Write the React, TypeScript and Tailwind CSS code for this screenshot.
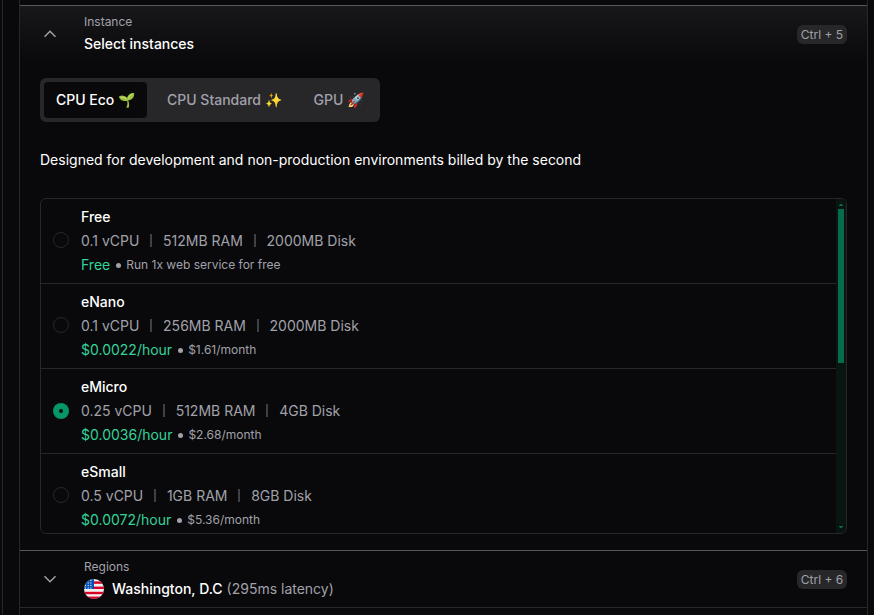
import React from "react";

type Instance = {
  name: string;
  cpu: string;
  ram: string;
  disk: string;
  price: string;
  note: string;
};

const instances: Instance[] = [
  { name: "Free", cpu: "0.1 vCPU", ram: "512MB RAM", disk: "2000MB Disk", price: "Free", note: "Run 1x web service for free" },
  { name: "eNano", cpu: "0.1 vCPU", ram: "256MB RAM", disk: "2000MB Disk", price: "$0.0022/hour", note: "$1.61/month" },
  { name: "eMicro", cpu: "0.25 vCPU", ram: "512MB RAM", disk: "4GB Disk", price: "$0.0036/hour", note: "$2.68/month" },
  { name: "eSmall", cpu: "0.5 vCPU", ram: "1GB RAM", disk: "8GB Disk", price: "$0.0072/hour", note: "$5.36/month" },
];

function Chevron({ up = false }: { up?: boolean }) {
  return (
    <svg width="20" height="20" viewBox="0 0 20 20" className="shrink-0" fill="none" stroke="#a1a1aa" strokeWidth="1.5">
      <path d={up ? "M4.5 12.8 L10 7.3 L15.5 12.8" : "M4.5 7.2 L10 12.7 L15.5 7.2"} />
    </svg>
  );
}

function Shortcut({ children }: { children: React.ReactNode }) {
  return (
    <kbd className="mt-px flex h-[19px] w-[50px] items-center justify-center rounded-md bg-[#27272a] font-[Inter,sans-serif] text-xs whitespace-nowrap text-[#a1a1aa]">
      {children}
    </kbd>
  );
}

function Separator() {
  return <span className="mb-px h-[13px] w-[2px] shrink-0 bg-[#3f3f46]" />;
}

function Radio({ checked }: { checked: boolean }) {
  return checked ? (
    <span className="flex size-4 shrink-0 items-center justify-center rounded-full bg-[#059669]">
      <span className="size-1 rounded-full bg-[#09090b]" />
    </span>
  ) : (
    <span className="mb-[2px] size-4 shrink-0 rounded-full border border-[#27272a]" />
  );
}

function InstanceRow({ item, checked }: { item: Instance; checked: boolean }) {
  return (
    <div className="flex h-[85px] shrink-0 items-center border-b border-[#27272a] pl-3">
      <Radio checked={checked} />
      <div className="ml-3 text-sm leading-6">
        <div className="font-medium text-white">{item.name}</div>
        <div className="flex items-center gap-[10.85px] text-[#a1a1aa]">
          <span>{item.cpu}</span>
          <Separator />
          <span>{item.ram}</span>
          <Separator />
          <span>{item.disk}</span>
        </div>
        <div className="flex items-center text-[#34d399]">
          <span>{item.price}</span>
          <span className="mt-px mr-[5px] ml-[6px] size-[5px] rounded-full bg-[#a1a1aa]" />
          <span className="text-xs leading-6 text-[#a1a1aa]">{item.note}</span>
        </div>
      </div>
    </div>
  );
}

function Flag() {
  return (
    <svg width="20" height="20" viewBox="0 0 20 20" className="shrink-0">
      <defs>
        <clipPath id="disc">
          <circle cx="10" cy="10" r="10" />
        </clipPath>
      </defs>
      <g clipPath="url(#disc)">
        <rect width="20" height="20" fill="#f0f0f0" />
        {[2.6, 7.8, 13, 17.8].map((y) => (
          <rect key={y} y={y - 0.2} width="20" height="2.4" fill="#d80027" />
        ))}
        <rect width="10" height="10" fill="#0052b4" />
        {[1.5, 4, 6.5, 9].map((y) =>
          [1.5, 4.2, 6.9].map((x) => <circle key={`${x}-${y}`} cx={x} cy={y} r="0.65" fill="#d5e2f0" />)
        )}
      </g>
    </svg>
  );
}

export default function App() {
  return (
    <div className="flex h-[615px] w-[874px] overflow-hidden bg-[#09090b] pl-[2px] font-[Inter,'Noto_Color_Emoji',sans-serif]">
      <div className="w-[17px] shrink-0 border-l border-[#27272a]" />
      <main className="flex w-[849px] shrink-0 flex-col border-x border-[#27272a] pt-[5px]">
        <section className="h-[545px] shrink-0 border-t border-[#58585c]">
          <header className="flex h-14 items-center bg-linear-to-b from-[#18181b] to-[#09090b] px-5">
            <Chevron up />
            <div className="ml-6">
              <div className="text-xs leading-4 text-[#a1a1aa]">Instance</div>
              <div className="mt-[4px] text-sm leading-5 font-medium text-white">Select instances</div>
            </div>
            <div className="ml-auto">
              <Shortcut>Ctrl + 5</Shortcut>
            </div>
          </header>
          <div className="px-5 pt-4">
            <div className="flex h-11 w-[340px] rounded-md bg-[#27272a] p-1 text-sm font-medium whitespace-nowrap text-[#a1a1aa]">
              <div className="flex w-[103px] items-center rounded bg-[#09090b] pl-3 text-white">CPU Eco 🌱</div>
              <div className="flex w-[146.6px] items-center gap-[4.6px] pl-5">
                <span>CPU Standard</span>
                <span>✨</span>
              </div>
              <div className="flex items-center pl-5">GPU 🚀</div>
            </div>
            <p className="mt-7 text-sm leading-5 text-white">
              Designed for development and non-production environments billed by the second
            </p>
            <div className="mt-7 flex h-[336px] overflow-hidden rounded-md border border-[#27272a]">
              <div className="flex min-w-0 flex-1 flex-col overflow-hidden">
                {instances.map((item) => (
                  <InstanceRow key={item.name} item={item} checked={item.name === "eMicro"} />
                ))}
              </div>
              <div className="flex w-[10px] flex-col items-center bg-[#081511]">
                <svg width="10" height="10" viewBox="0 0 10 10" fill="#066c4b">
                  <path d="M4 5h2v1h1v1H3V6h1z" />
                </svg>
                <div className="h-[154px] w-[6px] bg-[#066c4b]" />
                <svg width="10" height="10" viewBox="0 0 10 10" fill="#066c4b" className="mt-auto">
                  <path d="M3 3h4v1H6v1H4V4H3z" />
                </svg>
              </div>
            </div>
          </div>
        </section>
        <section className="flex h-[58px] shrink-0 items-center border-t border-b border-t-[#58585c] border-b-[#27272a] px-5">
          <Chevron />
          <div className="ml-6">
            <div className="text-xs leading-4 text-[#a1a1aa]">Regions</div>
            <div className="mt-[4px] flex items-center text-sm leading-5">
              <Flag />
              <span className="ml-2 font-medium text-white">Washington, D.C</span>
              <span className="ml-1 text-[#a1a1aa]">(295ms latency)</span>
            </div>
          </div>
          <div className="ml-auto">
            <Shortcut>Ctrl + 6</Shortcut>
          </div>
        </section>
      </main>
    </div>
  );
}
